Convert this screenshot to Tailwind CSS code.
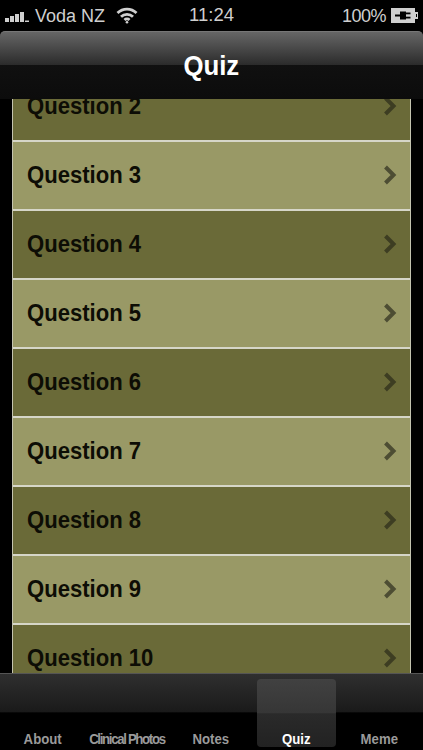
<!DOCTYPE html>
<html lang="en">
<head>
<meta charset="UTF-8">
<meta name="viewport" content="width=device-width, initial-scale=1.0">
<title>Quiz</title>
<script src="https://cdn.jsdelivr.net/npm/@tailwindcss/browser@4"></script>
</head>
<body class="bg-black">
<div class="w-[423px] h-[750px] flex flex-col overflow-hidden bg-black font-['Liberation_Sans',Arial,sans-serif]">

  <!-- Status bar -->
  <div class="h-[31px] shrink-0 flex items-center justify-between pl-[5px] pr-[5px] text-[#cfcfcf] text-[18px] leading-none">
    <div class="flex items-center w-[150px]">
      <svg width="26" height="14" viewBox="0 0 26 14" fill="#cfcfcf"><rect x="0" y="9" width="4" height="4"/><rect x="5" y="7" width="4" height="6"/><rect x="10" y="5" width="4" height="8"/><rect x="15" y="3" width="4" height="10"/><rect x="20" y="11.500" width="4" height="1.500"/></svg>
      <span class="ml-[4px]">Voda NZ</span>
      <svg class="ml-[11px]" width="22" height="17" viewBox="0 0 22 17" fill="none" stroke="#cfcfcf" stroke-width="2.800"><path d="M1.500 6a13.500 13.500 0 0 1 19 0"/><path d="M5 9.800a8.500 8.500 0 0 1 12 0"/><path d="M8.500 13a3.600 3.600 0 0 1 5 0"/><circle cx="11" cy="15.300" r="1.300" fill="#cfcfcf" stroke="none"/></svg>
    </div>
    <span class="text-[18.500px]">11:24</span>
    <div class="flex items-center justify-end w-[150px]">
      <span class="tracking-[-0.5px]">100%</span>
      <svg class="ml-[5px]" width="27" height="15" viewBox="0 0 27 15"><path fill="#cfcfcf" d="M0 0h24v4h3v7h-3v4H0z"/><rect x="25" y="6" width="1" height="3" fill="#000"/><g fill="#000"><rect x="4" y="6.500" width="5" height="2"/><rect x="9" y="3.500" width="6" height="8"/><rect x="15" y="4.500" width="4.500" height="1.800"/><rect x="15" y="8.700" width="4.500" height="1.800"/></g></svg>
    </div>
  </div>

  <!-- Nav bar -->
  <div class="h-[68px] shrink-0 z-10 flex items-center justify-center rounded-t-[5px] border-t border-[#777] bg-[linear-gradient(#666666_0%,#2b2b2b_49%,#101010_50%,#0c0c0c_100%)]">
    <h1 class="text-white text-[28px] font-bold leading-none scale-x-[0.92]">Quiz</h1>
  </div>

  <!-- Question list -->
  <div class="h-[574px] shrink-0 overflow-hidden px-[12px]">
    <ul class="-mt-[26px] border-x border-x-[#c4c4b0] text-[24px] font-bold text-[#0d0d05]">
      <li class="h-[69px] flex items-center justify-between pl-[14px] pr-[13px] pb-[2px] bg-[#6a6a38] border-b-2 border-b-[#d6d6c8]"><span class="origin-left scale-x-[0.92]">Question 2</span><svg width="14" height="20" viewBox="0 0 14 20" fill="none" stroke="#3d3d22" stroke-width="4"><path d="M2.500 2l8 8-8 8"/></svg></li>
      <li class="h-[69px] flex items-center justify-between pl-[14px] pr-[13px] pb-[2px] bg-[#999966] border-b-2 border-b-[#d6d6c8]"><span class="origin-left scale-x-[0.92]">Question 3</span><svg width="14" height="20" viewBox="0 0 14 20" fill="none" stroke="#4d4d33" stroke-width="4"><path d="M2.500 2l8 8-8 8"/></svg></li>
      <li class="h-[69px] flex items-center justify-between pl-[14px] pr-[13px] pb-[2px] bg-[#6a6a38] border-b-2 border-b-[#d6d6c8]"><span class="origin-left scale-x-[0.92]">Question 4</span><svg width="14" height="20" viewBox="0 0 14 20" fill="none" stroke="#3d3d22" stroke-width="4"><path d="M2.500 2l8 8-8 8"/></svg></li>
      <li class="h-[69px] flex items-center justify-between pl-[14px] pr-[13px] pb-[2px] bg-[#999966] border-b-2 border-b-[#d6d6c8]"><span class="origin-left scale-x-[0.92]">Question 5</span><svg width="14" height="20" viewBox="0 0 14 20" fill="none" stroke="#4d4d33" stroke-width="4"><path d="M2.500 2l8 8-8 8"/></svg></li>
      <li class="h-[69px] flex items-center justify-between pl-[14px] pr-[13px] pb-[2px] bg-[#6a6a38] border-b-2 border-b-[#d6d6c8]"><span class="origin-left scale-x-[0.92]">Question 6</span><svg width="14" height="20" viewBox="0 0 14 20" fill="none" stroke="#3d3d22" stroke-width="4"><path d="M2.500 2l8 8-8 8"/></svg></li>
      <li class="h-[69px] flex items-center justify-between pl-[14px] pr-[13px] pb-[2px] bg-[#999966] border-b-2 border-b-[#d6d6c8]"><span class="origin-left scale-x-[0.92]">Question 7</span><svg width="14" height="20" viewBox="0 0 14 20" fill="none" stroke="#4d4d33" stroke-width="4"><path d="M2.500 2l8 8-8 8"/></svg></li>
      <li class="h-[69px] flex items-center justify-between pl-[14px] pr-[13px] pb-[2px] bg-[#6a6a38] border-b-2 border-b-[#d6d6c8]"><span class="origin-left scale-x-[0.92]">Question 8</span><svg width="14" height="20" viewBox="0 0 14 20" fill="none" stroke="#3d3d22" stroke-width="4"><path d="M2.500 2l8 8-8 8"/></svg></li>
      <li class="h-[69px] flex items-center justify-between pl-[14px] pr-[13px] pb-[2px] bg-[#999966] border-b-2 border-b-[#d6d6c8]"><span class="origin-left scale-x-[0.92]">Question 9</span><svg width="14" height="20" viewBox="0 0 14 20" fill="none" stroke="#4d4d33" stroke-width="4"><path d="M2.500 2l8 8-8 8"/></svg></li>
      <li class="h-[69px] flex items-center justify-between pl-[14px] pr-[13px] pb-[2px] bg-[#6a6a38] border-b-2 border-b-[#d6d6c8]"><span class="origin-left scale-x-[0.92]">Question 10</span><svg width="14" height="20" viewBox="0 0 14 20" fill="none" stroke="#3d3d22" stroke-width="4"><path d="M2.500 2l8 8-8 8"/></svg></li>
    </ul>
  </div>

  <!-- Tab bar -->
  <div class="h-[77px] shrink-0 flex pt-[5px] pb-[3px] border-t border-[#555] bg-[linear-gradient(#2f2f2f_0%,#1a1a1a_50%,#000000_51%,#000000_100%)] text-[15px] font-bold text-[#9a9a9a] leading-none whitespace-nowrap">
    <div class="w-[85px] flex items-end justify-center pb-[1px]"><span class="scale-x-[0.88]">About</span></div>
    <div class="w-[84px] flex items-end justify-center pb-[1px]"><span class="scale-x-[0.88] tracking-[-1.500px]">Clinical Photos</span></div>
    <div class="w-[84px] flex items-end justify-center pb-[1px]"><span class="scale-x-[0.88]">Notes</span></div>
    <div class="w-[79px] ml-[4px] flex items-end justify-center pb-[1px] rounded-[4px] text-white bg-[linear-gradient(#414141_0%,#363636_50%,#2a2a2a_51%,#222222_100%)]"><span class="scale-x-[0.88]">Quiz</span></div>
    <div class="flex-1 flex items-end justify-center pb-[1px]"><span class="scale-x-[0.88]">Meme</span></div>
  </div>
</div>
</body>
</html>
